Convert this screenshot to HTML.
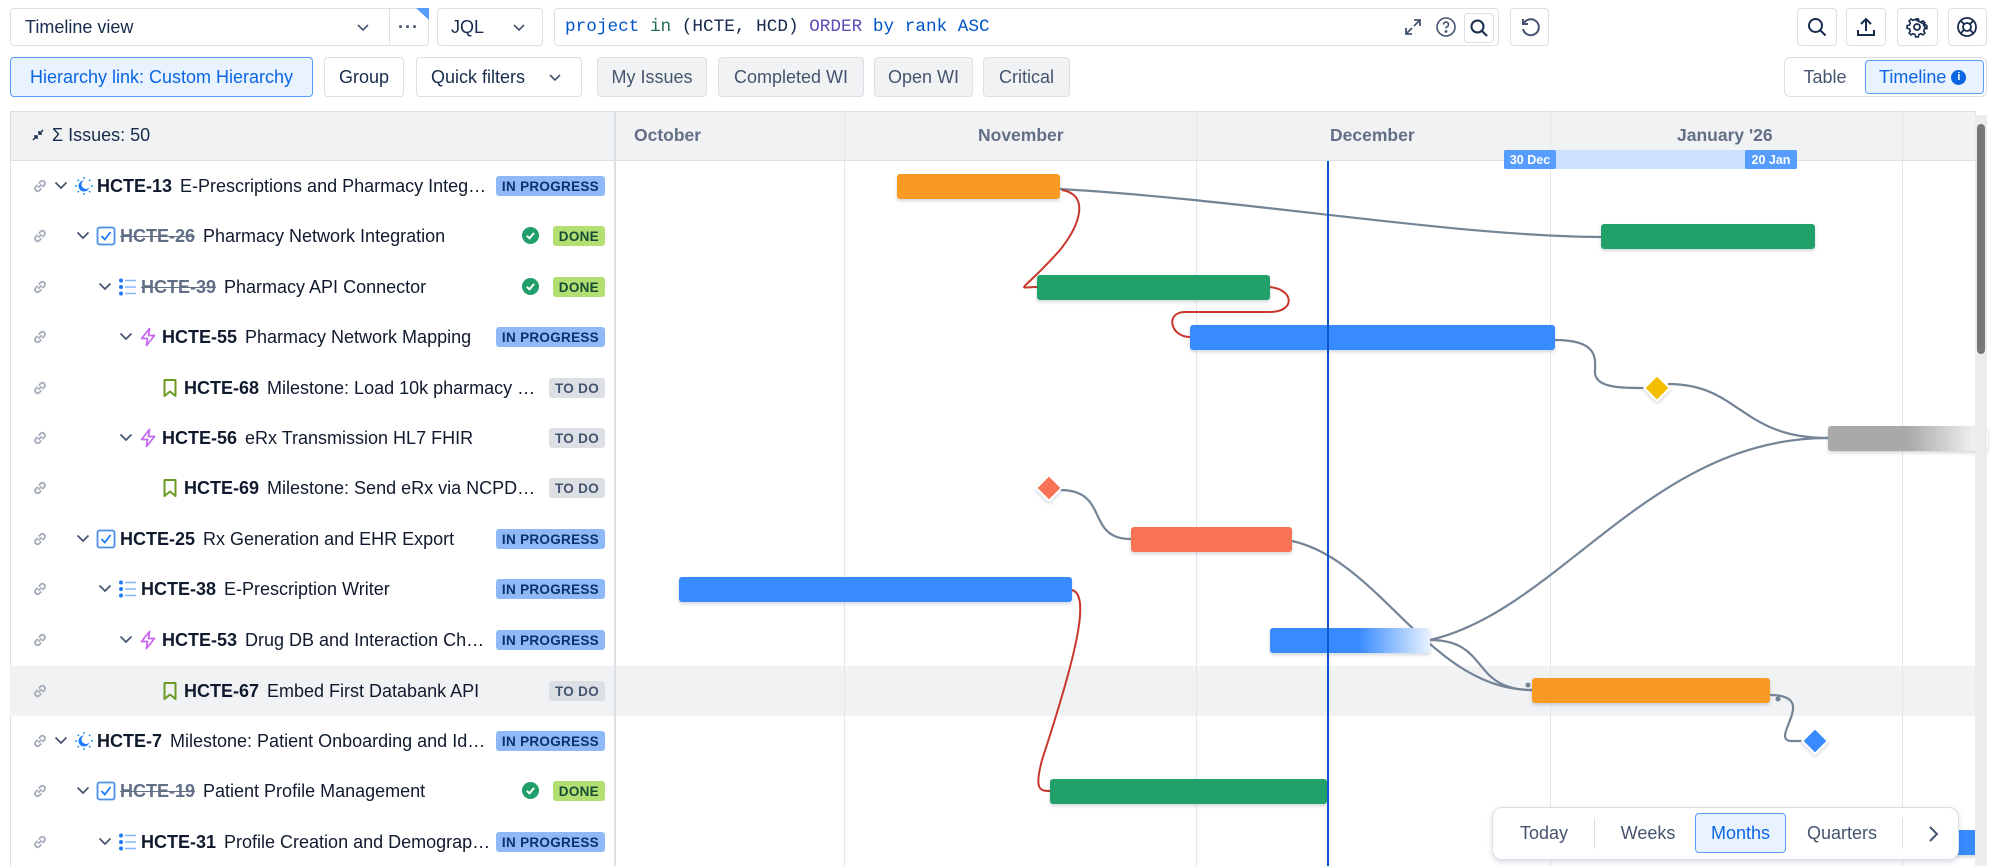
<!DOCTYPE html>
<html><head><meta charset="utf-8"><style>
*{box-sizing:border-box;margin:0;padding:0}
body{width:2000px;height:866px;overflow:hidden;background:#fff;font-family:"Liberation Sans",Arial,sans-serif;color:#172B4D;position:relative}
.a{position:absolute}
.btn{position:absolute;border:1px solid #DCDFE4;border-radius:4px;background:#fff;display:flex;align-items:center;justify-content:center;font-size:18px;color:#172B4D}
.chip{background:#F1F2F4;color:#44546F}
.row{position:absolute;left:10px;width:605px;height:50px}
.row .t{position:absolute;top:0;height:50px;display:flex;align-items:center;font-size:18px;white-space:nowrap;color:#101a2e}
.row .t b{font-weight:bold;margin-right:8px}
.row .t s{color:#626F86;font-weight:bold;margin-right:8px}
.bd{position:absolute;right:10px;top:15px;height:20px;border-radius:3px;font-size:13.5px;font-weight:bold;display:flex;align-items:center;padding:0 6px;letter-spacing:.3px}
.ip{background:#8FB8F6;color:#09326C}
.dn{background:#B3DF72;color:#164B35}
.td{background:#DCDFE4;color:#44546F}
.lk{position:absolute;left:21px;top:16px}
.ch{position:absolute;top:20px}
.ic{position:absolute;top:15px}
</style></head><body>

<div class="btn" style="left:10px;top:8px;width:419px;height:38px;justify-content:flex-start;padding-left:14px">Timeline view</div>
<svg class="a" style="left:356px;top:23px" width="14" height="9"><polyline points="2,2 7,7 12,2" fill="none" stroke="#44546F" stroke-width="1.6"/></svg>
<div class="a" style="left:389px;top:9px;width:1px;height:36px;background:#DCDFE4"></div>
<div class="a" style="left:398px;top:17px;font-size:18px;font-weight:bold;color:#44546F;letter-spacing:1px">···</div>
<svg class="a" style="left:416px;top:8px" width="13" height="12"><polygon points="0,0 13,0 13,12" fill="#579DFF"/></svg>
<div class="btn" style="left:437px;top:8px;width:106px;height:38px;justify-content:flex-start;padding-left:13px">JQL</div>
<svg class="a" style="left:512px;top:23px" width="14" height="9"><polyline points="2,2 7,7 12,2" fill="none" stroke="#44546F" stroke-width="1.6"/></svg>
<div class="btn" style="left:554px;top:8px;width:945px;height:38px;justify-content:flex-start;padding-left:10px;font-family:'Liberation Mono',monospace;font-size:17.7px"><span style="color:#0055CC">project</span>&nbsp;<span style="color:#216E4E">in</span>&nbsp;<span style="color:#172B4D">(HCTE, HCD)</span>&nbsp;<span style="color:#5E4DB2">ORDER</span>&nbsp;<span style="color:#0055CC">by rank ASC</span></div>
<svg class="a" style="left:1403px;top:17px" width="20" height="20" fill="none" stroke="#44546F" stroke-width="1.8"><path d="M11 3h6v6M17 3l-6 6M9 17H3v-6M3 17l6-6"/></svg>
<svg class="a" style="left:1435px;top:16px" width="22" height="22" fill="none" stroke="#44546F" stroke-width="1.6"><circle cx="11" cy="11" r="9"/><path d="M8.5 8.5a2.5 2.5 0 1 1 3.5 2.3c-.7.3-1 .8-1 1.6"/><circle cx="11" cy="15.5" r=".6" fill="#44546F"/></svg>
<div class="btn" style="left:1464px;top:13px;width:30px;height:30px"></div>
<svg class="a" style="left:1469px;top:18px" width="20" height="20" fill="none" stroke="#172B4D" stroke-width="2"><circle cx="8.5" cy="8.5" r="6"/><path d="M13 13l5 5"/></svg>
<div class="btn" style="left:1510px;top:8px;width:39px;height:38px"></div>
<svg class="a" style="left:1519px;top:16px" width="22" height="22" fill="none" stroke="#44546F" stroke-width="2"><path d="M5 7a8 8 0 1 1-1 6"/><path d="M4 3v5h5"/></svg>
<div class="btn" style="left:1797px;top:8px;width:40px;height:38px"></div>
<svg class="a" style="left:1806px;top:16px" width="22" height="22" fill="none" stroke="#172B4D" stroke-width="2"><circle cx="9.5" cy="9.5" r="6.5"/><path d="M14.5 14.5l5 5"/></svg>
<div class="btn" style="left:1846px;top:8px;width:40px;height:38px"></div>
<svg class="a" style="left:1855px;top:16px" width="22" height="22" fill="none" stroke="#172B4D" stroke-width="2"><path d="M11 3v12M6 8l5-5 5 5M3 14v5h16v-5"/></svg>
<div class="btn" style="left:1897px;top:8px;width:41px;height:38px"></div>
<svg class="a" style="left:1906px;top:16px" width="22" height="22" fill="none" stroke="#172B4D" stroke-width="1.8"><circle cx="11" cy="11" r="3"/><path d="M9.5 2h3l.6 2.6 2.3 1 2.3-1.4 2.1 2.1-1.4 2.3 1 2.3L22 12.5v-3M22 9.5v3l-2.6.6-1 2.3 1.4 2.3-2.1 2.1-2.3-1.4-2.3 1L12.5 22h-3l-.6-2.6-2.3-1-2.3 1.4-2.1-2.1 1.4-2.3-1-2.3L0 12.5v-3l2.6-.6 1-2.3-1.4-2.3 2.1-2.1 2.3 1.4 2.3-1z" transform="scale(.9) translate(1.2 1.2)"/></svg>
<div class="btn" style="left:1948px;top:8px;width:39px;height:38px"></div>
<svg class="a" style="left:1956px;top:16px" width="22" height="22" fill="none" stroke="#172B4D" stroke-width="1.8"><circle cx="11" cy="11" r="9"/><circle cx="11" cy="11" r="4"/><path d="M4.6 4.6l3.6 3.6M17.4 4.6l-3.6 3.6M4.6 17.4l3.6-3.6M17.4 17.4l-3.6-3.6"/></svg>

<div class="btn" style="left:10px;top:57px;width:303px;height:40px;background:#E9F2FF;border-color:#579DFF;color:#0C66E4">Hierarchy link: Custom Hierarchy</div>
<div class="btn" style="left:324px;top:57px;width:80px;height:40px">Group</div>
<div class="btn" style="left:416px;top:57px;width:166px;height:40px;justify-content:flex-start;padding-left:14px">Quick filters</div>
<svg class="a" style="left:548px;top:73px" width="14" height="9"><polyline points="2,2 7,7 12,2" fill="none" stroke="#44546F" stroke-width="1.6"/></svg>
<div class="btn chip" style="left:597px;top:57px;width:110px;height:40px">My Issues</div>
<div class="btn chip" style="left:718px;top:57px;width:146px;height:40px">Completed WI</div>
<div class="btn chip" style="left:874px;top:57px;width:99px;height:40px">Open WI</div>
<div class="btn chip" style="left:983px;top:57px;width:87px;height:40px">Critical</div>
<div class="btn" style="left:1784px;top:57px;width:203px;height:40px;border-radius:6px"></div>
<div class="a" style="left:1785px;top:58px;width:80px;height:38px;display:flex;align-items:center;justify-content:center;font-size:18px;color:#44546F">Table</div>
<div class="btn" style="left:1865px;top:60px;width:119px;height:34px;background:#E9F2FF;border-color:#579DFF;color:#0C66E4;justify-content:flex-start;padding-left:13px">Timeline<span style="display:inline-block;width:15px;height:15px;border-radius:50%;background:#0C66E4;color:#fff;font-size:11px;font-weight:bold;text-align:center;line-height:15px;margin-left:5px">i</span></div>

<div class="a" style="left:10px;top:111px;width:1966px;height:50px;background:#F1F2F4;border:1px solid #DCDFE4"></div>
<svg class="a" style="left:30px;top:127px" width="16" height="16" fill="none" stroke="#172B4D" stroke-width="1.5"><path d="M3 13l4-4M4 9h3v3M13 3l-4 4M9 4v3h3"/></svg>
<div class="a" style="left:52px;top:125px;font-size:18px">Σ Issues: 50</div>
<div class="a" style="left:634px;top:125px;font-size:17.5px;font-weight:bold;color:#626F86">October</div>
<div class="a" style="left:978px;top:125px;font-size:17.5px;font-weight:bold;color:#626F86">November</div>
<div class="a" style="left:1330px;top:125px;font-size:17.5px;font-weight:bold;color:#626F86">December</div>
<div class="a" style="left:1677px;top:125px;font-size:17.5px;font-weight:bold;color:#626F86">January '26</div>

<div class="a" style="left:10px;top:161px;width:1px;height:705px;background:#DCDFE4"></div>
<div class="a" style="left:10px;top:666px;width:1966px;height:50px;background:#F1F2F4"></div>
<div class="a" style="left:614px;top:111px;width:2px;height:755px;background:#DCDFE4"></div>
<div class="a" style="left:844px;top:111px;width:1px;height:755px;background:#E4E6EA"></div>
<div class="a" style="left:1196px;top:111px;width:1px;height:755px;background:#E4E6EA"></div>
<div class="a" style="left:1550px;top:111px;width:1px;height:755px;background:#E4E6EA"></div>
<div class="a" style="left:1902px;top:111px;width:1px;height:755px;background:#E4E6EA"></div>

<div class="a" style="left:1504px;top:150px;width:293px;height:19px;background:#CCE0FF"></div>
<div class="a" style="left:1504px;top:150px;width:52px;height:19px;background:#579DFF;color:#fff;font-size:12.5px;font-weight:bold;display:flex;align-items:center;justify-content:center;border-radius:2px">30 Dec</div>
<div class="a" style="left:1745px;top:150px;width:52px;height:19px;background:#579DFF;color:#fff;font-size:12.5px;font-weight:bold;display:flex;align-items:center;justify-content:center;border-radius:2px">20 Jan</div>

<svg class="a" style="left:0;top:0" width="2000" height="866">
<defs>
<linearGradient id="gg" x1="0" x2="1"><stop offset="0.5" stop-color="#A9A9A9"/><stop offset="1" stop-color="#fff"/></linearGradient>
<linearGradient id="bg" x1="0" x2="1"><stop offset="0.55" stop-color="#388BFF"/><stop offset="1" stop-color="#E9F2FF"/></linearGradient>
<filter id="sh" x="-5%" y="-30%" width="110%" height="170%"><feDropShadow dx="0" dy="2" stdDeviation="1.5" flood-color="#091E42" flood-opacity="0.18"/></filter>
</defs>
<g fill="none" stroke="#738496" stroke-width="2.2">
<path d="M1060 189 C1250 200 1450 236 1601 237"/>
<path d="M1555 340 C1600 340 1595 360 1595 372 C1595 388 1620 388 1648 388"/>
<path d="M1668 384 C1740 384 1740 438 1828 438"/>
<path d="M1060 490 C1110 490 1085 539 1131 539"/>
<path d="M1292 541 C1380 560 1430 690 1532 690"/>
<path d="M1430 640 C1560 610 1650 438 1828 438"/>
<path d="M1430 640 C1490 640 1470 690 1532 690"/>
<path d="M1770 695 C1820 695 1770 738 1790 741 L1805 741"/>
</g>
<g fill="none" stroke="#C9372C" stroke-width="2">
<path d="M1062 190 C1090 195 1080 225 1060 250 C1020 295 1015 287 1037 287"/>
<path d="M1270 287 C1295 290 1295 312 1270 312 L1185 312 C1165 312 1170 337 1190 337"/>
<path d="M1072 590 C1090 595 1078 650 1042 760 C1034 790 1040 791 1050 791"/>
</g>
<circle cx="1528" cy="685" r="2.5" fill="#738496"/><circle cx="1778" cy="699" r="2.5" fill="#738496"/>
<g filter="url(#sh)">
<rect x="897" y="174" width="163" height="25" rx="3" fill="#F99A23"/>
<rect x="1601" y="224" width="214" height="25" rx="3" fill="#22A06B"/>
<rect x="1037" y="275" width="233" height="25" rx="3" fill="#22A06B"/>
<rect x="1190" y="325" width="365" height="25" rx="3" fill="#388BFF"/>
<rect x="1828" y="426" width="160" height="25" rx="3" fill="url(#gg)"/>
<rect x="1131" y="527" width="161" height="25" rx="3" fill="#F87357"/>
<rect x="679" y="577" width="393" height="25" rx="3" fill="#388BFF"/>
<rect x="1270" y="628" width="160" height="25" rx="3" fill="url(#bg)"/>
<rect x="1532" y="678" width="238" height="25" rx="3" fill="#F99A23"/>
<rect x="1050" y="779" width="277" height="25" rx="3" fill="#22A06B"/>
<rect x="1955" y="830" width="25" height="25" fill="#388BFF"/>
</g>
<g stroke="#fff" stroke-width="2" filter="url(#sh)">
<rect x="1648" y="379" width="18" height="18" fill="#F5BD00" transform="rotate(45 1657 388)"/>
<rect x="1040" y="479" width="18" height="18" fill="#F87357" transform="rotate(45 1049 488)"/>
<rect x="1806" y="732" width="18" height="18" fill="#388BFF" transform="rotate(45 1815 741)"/>
</g>
<rect x="1327" y="161" width="2" height="705" fill="#0C55CF"/>
</svg>

<div class="a" style="left:1975px;top:115px;width:12px;height:751px;background:#ECECEE"></div>
<div class="a" style="left:1977px;top:124px;width:8px;height:230px;border-radius:4px;background:#777"></div>

<svg width="0" height="0" style="position:absolute"><defs>
<symbol id="lk" viewBox="0 0 16 16"><g fill="none" stroke="#A5ADBA" stroke-width="1.6"><path d="M6.5 9.5l3-3"/><path d="M6 7L4 9a2.3 2.3 0 0 0 3.2 3.2l2-2"/><path d="M10 9l2-2a2.3 2.3 0 0 0-3.2-3.2l-2 2"/></g></symbol>
<symbol id="cv" viewBox="0 0 14 9"><polyline points="1.5,1.5 7,7 12.5,1.5" fill="none" stroke="#44546F" stroke-width="1.7"/></symbol>
<symbol id="ep" viewBox="0 0 20 20"><g stroke="#1D9AEF" stroke-width="1.4" fill="none"><path d="M10 1v2M10 17v2M1 10h2M17 10h2M3.6 3.6l1.4 1.4M15 15l1.4 1.4M3.6 16.4L5 15M15 5l1.4-1.4"/></g><circle cx="10" cy="10" r="5.5" fill="#1D7AFC"/><circle cx="12" cy="8.5" r="4.5" fill="#fff"/></symbol>
<symbol id="st" viewBox="0 0 20 20"><rect x="1.5" y="1.5" width="17" height="17" rx="2" fill="#fff" stroke="#4C8FE8" stroke-width="1.8"/><polyline points="5.5,10 8.8,13.5 14.5,6" fill="none" stroke="#1D7AFC" stroke-width="1.8"/></symbol>
<symbol id="ls" viewBox="0 0 20 20"><g fill="#1D7AFC"><circle cx="4" cy="3.5" r="2"/><circle cx="4" cy="10" r="2"/><circle cx="4" cy="16.5" r="2"/></g><g stroke="#85B8FF" stroke-width="1.6"><path d="M8 3.5h11M8 10h11M8 16.5h11"/></g></symbol>
<symbol id="bo" viewBox="0 0 20 20"><path d="M11.5 1.5L3.5 11.5h6l-1 7 8-10h-6z" fill="none" stroke="#C566F0" stroke-width="1.7" stroke-linejoin="round"/></symbol>
<symbol id="bm" viewBox="0 0 20 20"><path d="M4.5 2h11v16L10 13.5 4.5 18z" fill="none" stroke="#6A9A23" stroke-width="2" stroke-linejoin="round"/></symbol>
<symbol id="ok" viewBox="0 0 17 17"><circle cx="8.5" cy="8.5" r="8.5" fill="#22A06B"/><polyline points="4.8,8.8 7.5,11.3 12,6" fill="none" stroke="#fff" stroke-width="2"/></symbol>
</defs></svg>

<div class="row" style="top:161px"><svg class="lk" width="18" height="18"><use href="#lk"/></svg><svg class="ch" style="left:44px" width="14" height="9"><use href="#cv"/></svg><svg class="ic" style="left:64px" width="20" height="20"><use href="#ep"/></svg><div class="t" style="left:87px"><b>HCTE-13</b>E-Prescriptions and Pharmacy Integ…</div><div class="bd ip">IN PROGRESS</div></div>
<div class="row" style="top:211px"><svg class="lk" width="18" height="18"><use href="#lk"/></svg><svg class="ch" style="left:66px" width="14" height="9"><use href="#cv"/></svg><svg class="ic" style="left:86px" width="20" height="20"><use href="#st"/></svg><div class="t" style="left:110px"><s>HCTE-26</s>Pharmacy Network Integration</div><svg class="a" style="right:76px;top:16px" width="17" height="17"><use href="#ok"/></svg><div class="bd dn">DONE</div></div>
<div class="row" style="top:262px"><svg class="lk" width="18" height="18"><use href="#lk"/></svg><svg class="ch" style="left:88px" width="14" height="9"><use href="#cv"/></svg><svg class="ic" style="left:107px" width="20" height="20"><use href="#ls"/></svg><div class="t" style="left:131px"><s>HCTE-39</s>Pharmacy API Connector</div><svg class="a" style="right:76px;top:16px" width="17" height="17"><use href="#ok"/></svg><div class="bd dn">DONE</div></div>
<div class="row" style="top:312px"><svg class="lk" width="18" height="18"><use href="#lk"/></svg><svg class="ch" style="left:109px" width="14" height="9"><use href="#cv"/></svg><svg class="ic" style="left:128px" width="20" height="20"><use href="#bo"/></svg><div class="t" style="left:152px"><b>HCTE-55</b>Pharmacy Network Mapping</div><div class="bd ip">IN PROGRESS</div></div>
<div class="row" style="top:363px"><svg class="lk" width="18" height="18"><use href="#lk"/></svg><svg class="ic" style="left:150px" width="20" height="20"><use href="#bm"/></svg><div class="t" style="left:174px"><b>HCTE-68</b>Milestone: Load 10k pharmacy …</div><div class="bd td">TO DO</div></div>
<div class="row" style="top:413px"><svg class="lk" width="18" height="18"><use href="#lk"/></svg><svg class="ch" style="left:109px" width="14" height="9"><use href="#cv"/></svg><svg class="ic" style="left:128px" width="20" height="20"><use href="#bo"/></svg><div class="t" style="left:152px"><b>HCTE-56</b>eRx Transmission HL7 FHIR</div><div class="bd td">TO DO</div></div>
<div class="row" style="top:463px"><svg class="lk" width="18" height="18"><use href="#lk"/></svg><svg class="ic" style="left:150px" width="20" height="20"><use href="#bm"/></svg><div class="t" style="left:174px"><b>HCTE-69</b>Milestone: Send eRx via NCPD…</div><div class="bd td">TO DO</div></div>
<div class="row" style="top:514px"><svg class="lk" width="18" height="18"><use href="#lk"/></svg><svg class="ch" style="left:66px" width="14" height="9"><use href="#cv"/></svg><svg class="ic" style="left:86px" width="20" height="20"><use href="#st"/></svg><div class="t" style="left:110px"><b>HCTE-25</b>Rx Generation and EHR Export</div><div class="bd ip">IN PROGRESS</div></div>
<div class="row" style="top:564px"><svg class="lk" width="18" height="18"><use href="#lk"/></svg><svg class="ch" style="left:88px" width="14" height="9"><use href="#cv"/></svg><svg class="ic" style="left:107px" width="20" height="20"><use href="#ls"/></svg><div class="t" style="left:131px"><b>HCTE-38</b>E-Prescription Writer</div><div class="bd ip">IN PROGRESS</div></div>
<div class="row" style="top:615px"><svg class="lk" width="18" height="18"><use href="#lk"/></svg><svg class="ch" style="left:109px" width="14" height="9"><use href="#cv"/></svg><svg class="ic" style="left:128px" width="20" height="20"><use href="#bo"/></svg><div class="t" style="left:152px"><b>HCTE-53</b>Drug DB and Interaction Ch…</div><div class="bd ip">IN PROGRESS</div></div>
<div class="row" style="top:666px"><svg class="lk" width="18" height="18"><use href="#lk"/></svg><svg class="ic" style="left:150px" width="20" height="20"><use href="#bm"/></svg><div class="t" style="left:174px"><b>HCTE-67</b>Embed First Databank API</div><div class="bd td">TO DO</div></div>
<div class="row" style="top:716px"><svg class="lk" width="18" height="18"><use href="#lk"/></svg><svg class="ch" style="left:44px" width="14" height="9"><use href="#cv"/></svg><svg class="ic" style="left:64px" width="20" height="20"><use href="#ep"/></svg><div class="t" style="left:87px"><b>HCTE-7</b>Milestone: Patient Onboarding and Id…</div><div class="bd ip">IN PROGRESS</div></div>
<div class="row" style="top:766px"><svg class="lk" width="18" height="18"><use href="#lk"/></svg><svg class="ch" style="left:66px" width="14" height="9"><use href="#cv"/></svg><svg class="ic" style="left:86px" width="20" height="20"><use href="#st"/></svg><div class="t" style="left:110px"><s>HCTE-19</s>Patient Profile Management</div><svg class="a" style="right:76px;top:16px" width="17" height="17"><use href="#ok"/></svg><div class="bd dn">DONE</div></div>
<div class="row" style="top:817px"><svg class="lk" width="18" height="18"><use href="#lk"/></svg><svg class="ch" style="left:88px" width="14" height="9"><use href="#cv"/></svg><svg class="ic" style="left:107px" width="20" height="20"><use href="#ls"/></svg><div class="t" style="left:131px"><b>HCTE-31</b>Profile Creation and Demograp…</div><div class="bd ip">IN PROGRESS</div></div>

<div class="a" style="left:1492px;top:807px;width:467px;height:53px;background:#fff;border:1px solid #DCDFE4;border-radius:10px;box-shadow:0 2px 6px rgba(9,30,66,.15)"></div>
<div class="a" style="left:1508px;top:823px;width:72px;text-align:center;font-size:18px;color:#44546F">Today</div>
<div class="a" style="left:1594px;top:818px;width:1px;height:31px;background:#DCDFE4"></div>
<div class="a" style="left:1612px;top:823px;width:72px;text-align:center;font-size:18px;color:#44546F">Weeks</div>
<div class="a" style="left:1695px;top:813px;width:91px;height:40px;background:#E9F2FF;border:1px solid #579DFF;border-radius:4px;display:flex;align-items:center;justify-content:center;font-size:18px;color:#0C66E4">Months</div>
<div class="a" style="left:1796px;top:823px;width:92px;text-align:center;font-size:18px;color:#44546F">Quarters</div>
<div class="a" style="left:1902px;top:818px;width:1px;height:31px;background:#DCDFE4"></div>
<svg class="a" style="left:1927px;top:825px" width="12" height="18" fill="none" stroke="#44546F" stroke-width="2"><polyline points="3,2 10,9 3,16"/></svg>
</body></html>
